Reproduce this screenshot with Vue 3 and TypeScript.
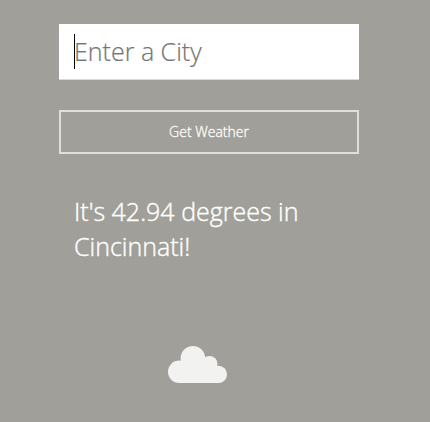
<script setup lang="ts">
import { ref } from 'vue'

const city = ref('')
const temperature = ref(42.94)
const place = ref('Cincinnati')
</script>

<template>
  <main class="weather">
    <label class="field">
      <span class="caret"></span>
      <input v-model="city" class="city" type="text" placeholder="Enter a City" />
    </label>
    <button class="submit" type="button">Get Weather</button>
    <p class="result">It's {{ temperature }} degrees in {{ place }}!</p>
    <svg class="cloud" viewBox="0 0 60 38" width="60" height="38" aria-hidden="true">
      <circle cx="11.200" cy="25.800" r="11.200" />
      <circle cx="24.900" cy="12.300" r="12.300" />
      <circle cx="41.500" cy="18" r="8" />
      <circle cx="50.400" cy="28.400" r="8.600" />
      <path d="M11 37 V20 L24 12 L41 18 L50.500 28 V37 Z" />
    </svg>
  </main>
</template>

<style>
body {
  background: #a09f99;
}
</style>

<style scoped>
.weather {
  box-sizing: border-box;
  width: 300px;
  height: 422px;
  margin-left: 59px;
  padding-top: 24px;
  display: flex;
  flex-direction: column;
  font-family: 'Open Sans', sans-serif;
  font-weight: 300;
  color: #fff;
}
.field {
  box-sizing: border-box;
  display: flex;
  align-items: flex-start;
  height: 56px;
  padding: 10px 15px 0;
  border-bottom: 1px solid #d9d9d7;
  background: #fff;
}
.caret {
  flex: none;
  width: 1px;
  height: 35px;
  margin-right: -1px;
  background: #000;
}
.city {
  width: 270px;
  height: 35px;
  padding: 0;
  border: 0;
  outline: 0;
  background: transparent;
  font: inherit;
  font-size: 25px;
  line-height: 35px;
  color: #444;
}
.city::placeholder {
  color: #757575;
  opacity: 1;
  -webkit-text-stroke: 0.2px #757575;
}
.submit {
  height: 44px;
  margin-top: 30px;
  padding: 0 0 2px;
  border: 2px solid #dededd;
  background: transparent;
  font: inherit;
  font-size: 14px;
  color: #fff;
  -webkit-text-stroke: 0.3px #fff;
}
.result {
  margin: 40px 15px 0;
  font-size: 25px;
  line-height: 35px;
  -webkit-text-stroke: 0.4px #fff;
}
.cloud {
  margin: 82px 0 0 109px;
  fill: #f2f2f0;
}
</style>
